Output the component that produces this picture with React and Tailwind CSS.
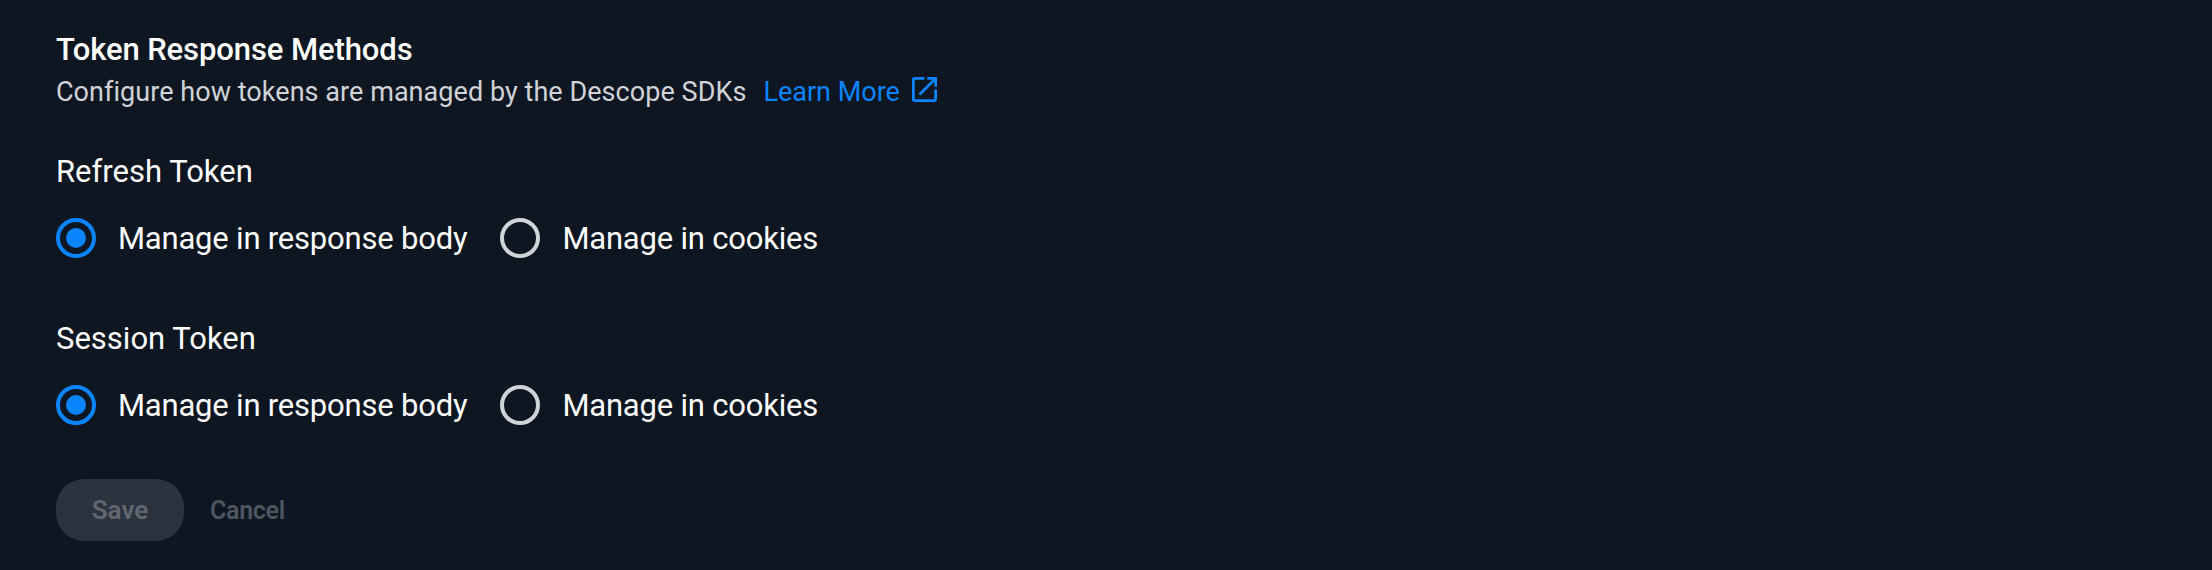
const options = ["Manage in response body", "Manage in cookies"]

function ExternalLinkIcon() {
  return (
    <svg viewBox="3 3 18 18" className="mt-[-6px] ml-3 h-[25px] w-[25px] fill-[#0a84ff]">
      <path d="M19 19H5V5h7V3H5a2 2 0 0 0-2 2v14a2 2 0 0 0 2 2h14c1.1 0 2-.9 2-2v-7h-2v7zM14 3v2h3.59l-9.83 9.83 1.41 1.41L19 6.41V10h2V3h-7z" />
    </svg>
  )
}

function Radio({ label, checked }) {
  return (
    <label className="flex items-center gap-[22px]">
      <span
        className={`flex h-10 w-10 items-center justify-center rounded-full border-[4px] ${
          checked ? "border-[#0a84ff]" : "border-[#d0d3d7]"
        }`}
      >
        {checked && <span className="h-5 w-5 rounded-full bg-[#0a84ff]" />}
      </span>
      <span className="pt-[2px] text-[31px] leading-10 tracking-[-0.2px] text-white">{label}</span>
    </label>
  )
}

function TokenGroup({ title, className }) {
  return (
    <div className={className}>
      <div className="text-[31px] leading-10 text-white">{title}</div>
      <div className="mt-[25px] flex items-center gap-[33px]">
        {options.map((option, i) => (
          <Radio key={option} label={option} checked={i === 0} />
        ))}
      </div>
    </div>
  )
}

export default function App() {
  return (
    <div className="h-[570px] bg-[#0e1621] px-14 pt-[30px] font-['Roboto',sans-serif]">
      <h2 className="text-[31px] leading-10 font-medium tracking-[-0.1px] text-white">Token Response Methods</h2>
      <div className="mt-[2px] flex items-center">
        <span className="text-[27px] leading-10 tracking-[0.05px] text-[#d0d3d7]">
          Configure how tokens are managed by the Descope SDKs
        </span>
        <a className="ml-[17px] text-[27px] leading-10 text-[#0a84ff]">Learn More</a>
        <ExternalLinkIcon />
      </div>
      <TokenGroup title="Refresh Token" className="mt-10" />
      <TokenGroup title="Session Token" className="mt-[60px]" />
      <div className="mt-[53px] flex items-center gap-[26px]">
        <button className="h-[62px] w-32 rounded-[28px] bg-[#2c333e] text-[26px] font-semibold text-[#616670]">Save</button>
        <button className="pt-[2px] text-[25px] font-semibold tracking-[-0.3px] text-[#4f5560]">Cancel</button>
      </div>
    </div>
  )
}
